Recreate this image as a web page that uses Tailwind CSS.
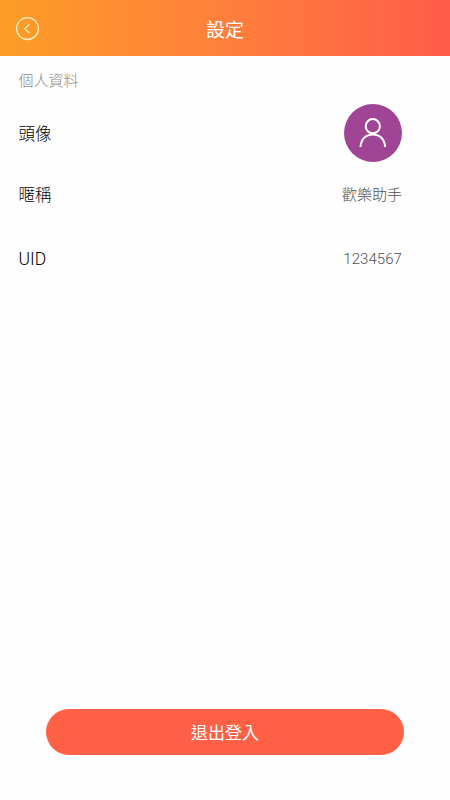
<!DOCTYPE html>
<html lang="zh-Hant">
<head>
  <meta charset="UTF-8" />
  <meta name="viewport" content="width=device-width, initial-scale=1.0"/>
  <title>設定</title>
  <script src="https://cdn.jsdelivr.net/npm/@tailwindcss/browser@4"></script>
</head>
<body class="h-screen flex flex-col bg-[#fefefe] font-['Noto_Sans_CJK_TC',sans-serif]">

  <!-- Header -->
  <header class="h-14 shrink-0 grid grid-cols-[1fr_auto_1fr] items-center px-4 bg-linear-to-r from-[#fd9d24] to-[#ff5c48] text-white">
    <button type="button" aria-label="返回" class="w-6 h-6 mt-0.5">
      <svg class="w-6 h-6" viewBox="0 0 24 24" fill="none" stroke="#fff0c4">
        <circle cx="11.5" cy="11.6" r="10.9" stroke-width="1.3"/>
        <path d="m13.400 7.300-4.800 4.400 4.800 4.400" stroke-width="1.3"/>
      </svg>
    </button>
    <h1 class="text-[19px] leading-7 mt-0.5">設定</h1>
  </header>

  <!-- Profile -->
  <main class="grow pl-[18.5px] pr-12 pt-[14px]">
    <h2 class="text-[15px] leading-5 font-light text-[#8c8c8c]">個人資料</h2>

    <div class="h-[58px] mt-[14px] flex items-center justify-between">
      <span class="text-[16.5px] text-black font-light">頭像</span>
      <div class="w-[58px] h-[58px] rounded-full bg-[#a04496]">
        <svg class="w-[58px] h-[58px]" viewBox="0 0 58 58" fill="none" stroke="#fff" stroke-width="2">
          <circle cx="28.8" cy="22.2" r="7.1"/>
          <path d="M16.500 43c.4-8 5.300-12.600 12.300-12.600s11.900 4.600 12.300 12.600"/>
        </svg>
      </div>
    </div>

    <div class="h-16 flex items-center justify-between">
      <span class="text-[16.5px] text-black font-light">暱稱</span>
      <span class="text-[15px] text-[#505050] font-light">歡樂助手</span>
    </div>

    <div class="h-16 flex items-center justify-between pt-0.5 font-['Roboto',sans-serif]">
      <span class="text-[17.5px] text-black font-light">UID</span>
      <span class="text-[15px] text-[#505050] font-light tracking-[0.06px]">1234567</span>
    </div>
  </main>

  <!-- Logout -->
  <button type="button" class="h-[46px] shrink-0 mx-[46px] mb-[45px] rounded-full bg-[#ff6046] text-white text-[17px]">退出登入</button>

</body>
</html>
